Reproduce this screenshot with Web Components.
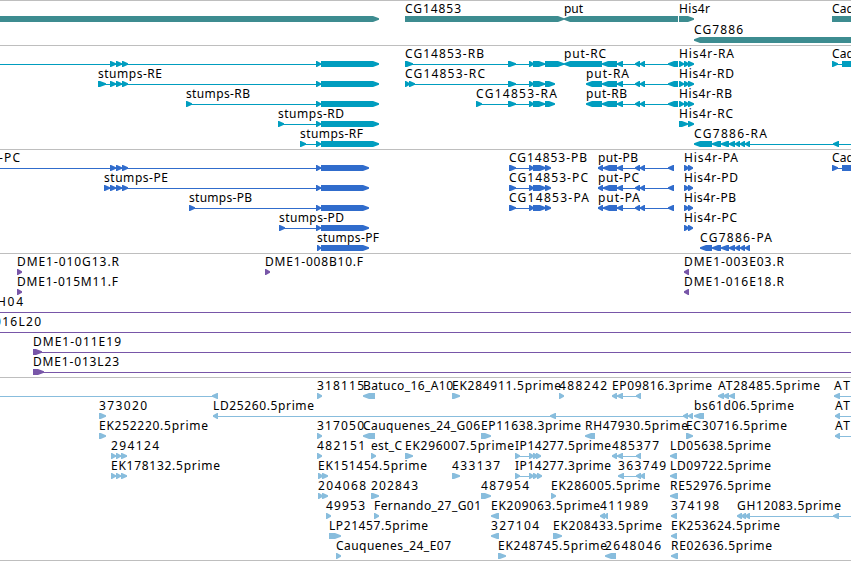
<!DOCTYPE html>
<html lang="en">
<head>
<meta charset="utf-8">
<title>Genome browser</title>
<style>
html,body{margin:0;background:#fff;overflow:hidden}
</style>
</head>
<body>
<genome-browser></genome-browser>
<script>
// Row syntax, entries separated by ";":
//   "text@left:right"  label      ">a b" / "<a b"  directed block      "-a b"  connector line
const stumps = '>316 321;>321 379', stumpsP = '>316 321;>321 369';
const cg = '>508 516;>529 534;>533 545';
const put = '<602 617;<617 623;-617 678;<635 640;<640 645;<668 678';
const h3 = '>679 684;>684 689;>688 694';
const cgP = '>509 516;-509 551;>529 534;>533 546;>545 551';
const putP = '<598 603;<603 617;<617 623;-598 674;<635 640;<640 645;<668 674';
const h2 = '>684 689;>688 693';
const ex = '>110 116;>116 122;>122 128';
const small = '<712 721;<721 729;<729 735;<735 740;<740 745;<745 750';
const TRACKS = [
 {color:'#3d8c90', row:21, rows:[
  `>-10 379;CG14853@405:461;>405 564;put@564:583;<564 678;His4r@679:710;>679 694;Cad@832:854;>832 880`,
  `CG7886@694:743;<694 880`]},
 {color:'#009dbf', row:20, bottom:2, rows:[
  `-0 321;${ex};${stumps};CG14853-RB@405:484;>405 413;-405 564;${cg};>545 564;put-RC@564:606;<564 602;${put};His4r-RA@679:734;${h3};Cad@832:854;>832 838;-832 845;>842 880`,
  `stumps-RE@98:162;>98 106;-98 321;${ex};${stumps};CG14853-RC@405:485;>405 410;>409 415;-405 548;${cg};>545 555;put-RA@586:629;<586 602;${put};His4r-RD@679:734;${h3}`,
  `stumps-RB@186:250;>186 192;-186 321;${stumps};CG14853-RA@476:557;>476 482;-476 548;${cg};>545 555;put-RB@586:627;<586 602;${put};His4r-RB@679:732;${h3}`,
  `stumps-RD@278:344;>278 284;-278 321;${stumps};His4r-RC@679:733;>679 688;>688 694`,
  `stumps-RF@300:363;>300 306;-300 321;${stumps};CG7886-RA@694:767;<694 712;${small};-745 860;<833 839`]},
 {color:'#306ccc', row:20, bottom:2, rows:[
  `-PC@-1:20;-0 321;${ex};${stumpsP};CG14853-PB@509:587;${cgP};put-PB@598:638;${putP};His4r-PA@684:738;${h2};Cad@832:854;>832 838;-832 845;>842 880`,
  `stumps-PE@104:168;>104 110;-104 321;${ex};${stumpsP};CG14853-PC@509:588;${cgP};put-PC@598:639;${putP};His4r-PD@684:738;${h2}`,
  `stumps-PB@189:252;>189 195;-189 321;${stumpsP};CG14853-PA@509:589;${cgP};put-PA@598:640;${putP};His4r-PB@684:736;${h2}`,
  `stumps-PD@279:344;>279 285;-279 321;${stumpsP};His4r-PC@684:737;${h2}`,
  `stumps-PF@317:379;>317 321;>321 369;CG7886-PA@700:772;<700 712;${small}`]},
 {color:'#7856a8', row:20, bottom:2, rows:[
  `DME1-010G13.R@17:119;>17 22;DME1-008B10.F@265:363;>265 270;DME1-003E03.R@684:784;<684 689`,
  `DME1-015M11.F@17:118;>17 22;DME1-016E18.R@684:784;<684 689`,
  `H04@-3:23;-0 860`,
  `016L20@-6:41;-0 860`,
  `DME1-011E19@33:121;>33 42;-33 860`,
  `DME1-013L23@33:119;>33 44;-33 860`]},
 {color:'#88bddd', row:20, rows:[
  `-0 213;<212 218;318115@317:364;>317 322;Batuco_16_A10@363:453;<363 375;EK284911.5prime@452:561;>452 460;488242@559:607;>559 564;EP09816.3prime@612:712;<612 617;<617 623;-617 641;<636 641;AT28485.5prime@718:820;<718 724;<723 729;<729 735;AT@834:850;<834 840;-834 860`,
  `373020@99:147;>99 106;LD25260.5prime@213:314;<213 218;-213 690;<550 556;<683 688;<688 693;<694 704;bs61d06.5prime@694:794;AT@835:850;<835 840;-835 860`,
  `EK252220.5prime@99:208;>99 106;317050@317:364;>317 322;Cauquenes_24_G06@363:480;<363 375;EP11638.3prime@481:581;>481 491;RH47930.5prime@585:688;<585 595;EC30716.5prime@686:787;>686 693;AT@835:850;<835 840;-835 860`,
  `294124@111:159;>111 116;>116 121;>121 127;-111 127;482151@317:365;>317 322;est_C@371:402;>371 376;EK296007.5prime@405:514;>405 413;IP14277.5prime@515:611;>515 520;-515 541;>529 534;>533 538;>536 541;485377@612:659;<612 617;<617 623;-612 641;<636 641;LD05638.5prime@670:771;<670 677`,
  `EK178132.5prime@111:220;>111 116;>116 121;>121 127;-111 127;EK151454.5prime@318:427;>318 323;>322 328;433137@452:500;>452 460;IP14277.3prime@515:611;>515 520;-515 541;>529 534;>533 538;>537 542;363749@618:666;<618 624;-618 645;<636 641;<640 645;LD09722.5prime@670:771;<670 677`,
  `204068@318:366;>318 323;>322 328;202843@371:418;>371 379;487954@481:529;>481 491;EK286005.5prime@551:660;>551 556;RE52976.5prime@670:771;<670 678`,
  `49953@326:365;>326 331;Fernando_27_G01@374:481;>374 379;EK209063.5prime@491:600;<491 499;411989@600:648;<600 605;<604 608;374198@671:719;<671 677;GH12083.5prime@737:841;<737 742;<741 746;<745 750;-741 860;<833 839`,
  `LP21457.5prime@329:428;>329 341;327104@491:539;<491 499;EK208433.5prime@553:662;>553 562;EK253624.5prime@671:780;<671 677`,
  `Cauquenes_24_E07@336:451;>336 341;EK248745.5prime@498:607;>498 506;2648046@605:661;<605 616;RE02636.5prime@671:772;<671 678`]}
];

// Outline of a block whose last pixels narrow to a blunt point in its reading direction.
function arrow(dir, a, b) {
  const w = b - a, head = w <= 6 ? w : Math.min(6, w * 0.75);
  const s = dir === '>' ? 1 : -1;
  const tip = dir === '>' ? b : a, back = dir === '>' ? a : b;
  const neck = tip - s * head, shoulder = w <= 6 ? neck + s : neck;
  return `<polygon points="${back},14 ${shoulder},14 ${tip},16.2 ${tip},17.8 ${shoulder},20 ${back},20"/>`;
}

class FeatureRow extends HTMLElement {
  constructor() { super(); this.attachShadow({mode:'open'}); }
  set features(spec) {
    let shapes = '', labels = '';
    for (const e of spec.split(';')) {
      let m = e.match(/^(.+)@(-?\d+):(\d+)$/);
      if (m) {
        labels += `<text x="${m[2]}" y="11" textLength="${m[3] - m[2]}" lengthAdjust="spacing">${m[1]}</text>`;
        continue;
      }
      m = e.match(/^([<>-])(-?\d+) (\d+)$/);
      shapes += m[1] === '-'
        ? `<rect x="${m[2]}" y="17" width="${m[3] - m[2]}" height="1"/>`
        : arrow(m[1], +m[2], +m[3]);
    }
    this.shadowRoot.innerHTML = `<style>
      :host{display:block;height:var(--row-height)}
      svg{display:block;width:100%;height:100%;overflow:visible}
      g{fill:var(--track-color)}
      text{font:12px "Noto Sans","Open Sans",sans-serif;fill:#000}
    </style><svg><g>${shapes}</g>${labels}</svg>`;
  }
}
customElements.define('feature-row', FeatureRow);

class GenomeTrack extends HTMLElement {
  constructor() {
    super();
    this.attachShadow({mode:'open'}).innerHTML = `<style>
      :host{display:block;border-top:1px solid #bebebe;padding-top:1px;padding-bottom:var(--track-bottom)}
    </style><slot></slot>`;
  }
}
customElements.define('genome-track', GenomeTrack);

class GenomeBrowser extends HTMLElement {
  constructor() {
    super();
    this.attachShadow({mode:'open'}).innerHTML = `<style>
      :host{display:flex;flex-direction:column;box-sizing:border-box;width:851px;height:561px;overflow:hidden;background:#fff;border-bottom:1px solid #bebebe}
      genome-track{flex:none}
    </style>`;
    for (const t of TRACKS) {
      const track = document.createElement('genome-track');
      track.style.setProperty('--track-color', t.color);
      track.style.setProperty('--row-height', t.row + 'px');
      track.style.setProperty('--track-bottom', (t.bottom || 1) + 'px');
      for (const r of t.rows) {
        const row = document.createElement('feature-row');
        row.features = r;
        track.append(row);
      }
      this.shadowRoot.append(track);
    }
  }
}
customElements.define('genome-browser', GenomeBrowser);
</script>
</body>
</html>
